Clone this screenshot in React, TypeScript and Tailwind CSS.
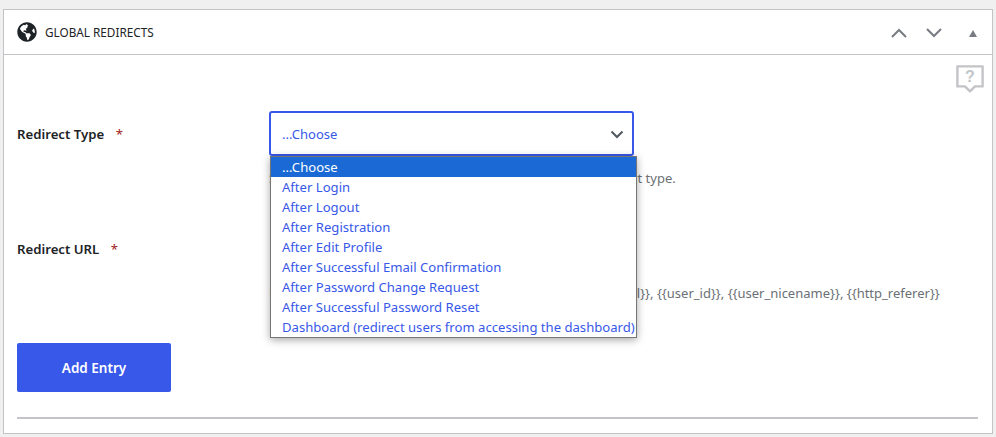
import { FaGlobeAmericas } from "react-icons/fa";

const OPTIONS = [
  "...Choose",
  "After Login",
  "After Logout",
  "After Registration",
  "After Edit Profile",
  "After Successful Email Confirmation",
  "After Password Change Request",
  "After Successful Password Reset",
  "Dashboard (redirect users from accessing the dashboard)",
];

function HelpBubble() {
  return (
    <svg width="28" height="28" viewBox="0 0 28 28" aria-hidden className="block">
      <path
        d="M1.4 1.4h25.2v20H19l-5 5-5-5H1.4z"
        fill="none"
        stroke="#c3c4c7"
        strokeWidth="2.4"
        strokeLinejoin="round"
      />
      <text
        x="14"
        y="17"
        textAnchor="middle"
        fontFamily="'Liberation Sans', sans-serif"
        fontWeight="700"
        fontSize="16"
        fill="#c3c4c7"
      >
        ?
      </text>
    </svg>
  );
}

function HeaderArrows() {
  return (
    <div className="flex items-center pt-[2px]">
      <svg width="16" height="10" viewBox="0 0 16 10" aria-hidden className="mr-[19px]">
        <path d="M1 9l7-7 7 7" fill="none" stroke="#787c82" strokeWidth="2" />
      </svg>
      <svg width="16" height="10" viewBox="0 0 16 10" aria-hidden className="mr-[27px]">
        <path d="M1 1l7 7 7-7" fill="none" stroke="#787c82" strokeWidth="2" />
      </svg>
      <span className="mr-[15px] block h-0 w-0 border-x-[4.5px] border-b-[7px] border-x-transparent border-b-[#787c82]" />
    </div>
  );
}

function SelectPopup() {
  return (
    <div className="absolute left-px top-[45px] z-10 w-[367px] border border-[#767676] bg-white shadow-[0_2px_8px_rgba(0,0,0,0.35)]">
      {OPTIONS.map((option, i) => (
        <div
          key={option}
          className={
            "h-5 whitespace-nowrap pl-[11px] text-[13.1px] leading-5 " +
            (i === 0 ? "bg-[#1a69d4] text-white" : "text-[#3858e9]")
          }
        >
          {option}
        </div>
      ))}
    </div>
  );
}

export default function App() {
  return (
    <div className="h-[437px] w-[996px] overflow-hidden bg-[#f0f0f1] px-[3px] pt-[9px] font-['Noto_Sans','Open_Sans',sans-serif]">
      <div className="h-[425px] w-[990px] border border-[#c3c4c7] bg-white">
        {/* Header */}
        <div className="flex h-[45px] items-center justify-between border-b border-[#c3c4c7] pl-[13px]">
          <div className="flex items-center gap-2">
            <FaGlobeAmericas className="size-5 text-[#1d2327]" />
            <span className="pt-[2px] text-[11.75px] text-[#1d2327]">GLOBAL REDIRECTS</span>
          </div>
          <HeaderArrows />
        </div>

        <div className="relative pl-[13px] pr-[14px]">
          <div className="-mr-[6px] flex justify-end pt-[10px]">
            <HelpBubble />
          </div>

          {/* Redirect Type */}
          <div className="mt-[18px] flex">
            <div className="w-[252px] pt-[14px] text-[13.2px] font-semibold text-[#1d2327]">
              Redirect Type <span className="ml-[8px] font-normal text-[#a02222]">*</span>
            </div>
            <div className="w-[365px]">
              <div className="relative">
                <div className="flex h-[45px] items-center justify-between rounded-[3px] border-2 border-[#3858e9] pl-[11px] pr-[8px] pt-[2px] text-[13px] text-[#3858e9]">
                  <span>...Choose</span>
                  <svg width="14" height="9" viewBox="0 0 14 9" aria-hidden>
                    <path d="M1.5 1.5L7 7l5.5-5.5" fill="none" stroke="#50575e" strokeWidth="2" />
                  </svg>
                </div>
                <SelectPopup />
              </div>
              <p className="mt-[13px] whitespace-nowrap text-[13px] leading-[18px] text-[#6b7075]">
                Select where users go after each event by choosing a redirect type.
              </p>
            </div>
          </div>

          {/* Redirect URL */}
          <div className="mt-[51px] flex">
            <div className="w-[252px] pt-[2px] text-[13.2px] font-semibold text-[#1d2327]">
              Redirect URL <span className="ml-[8px] font-normal text-[#a02222]">*</span>
            </div>
            <div className="w-[365px]">
              <div className="ml-px h-[38px] rounded-[3px] border border-[#8c8f94]" />
              <p className="mt-[8px] whitespace-nowrap text-[13px] leading-[18px] text-[#6b7075]">
                Enter the redirect URL. Available tags: {"{{site_url}}, {{home_url}}, {{user_id}}, {{user_nicename}}, {{http_referer}}"}
              </p>
            </div>
          </div>

          <button
            type="button"
            className="mt-[41px] block h-[49px] w-[154px] rounded-[2px] bg-[#3858e9] pt-[2px] text-[13.5px] font-semibold text-white"
          >
            Add Entry
          </button>

          <hr className="mt-[25px] border-t-2 border-[#c3c4c7]" />
        </div>
      </div>
    </div>
  );
}
